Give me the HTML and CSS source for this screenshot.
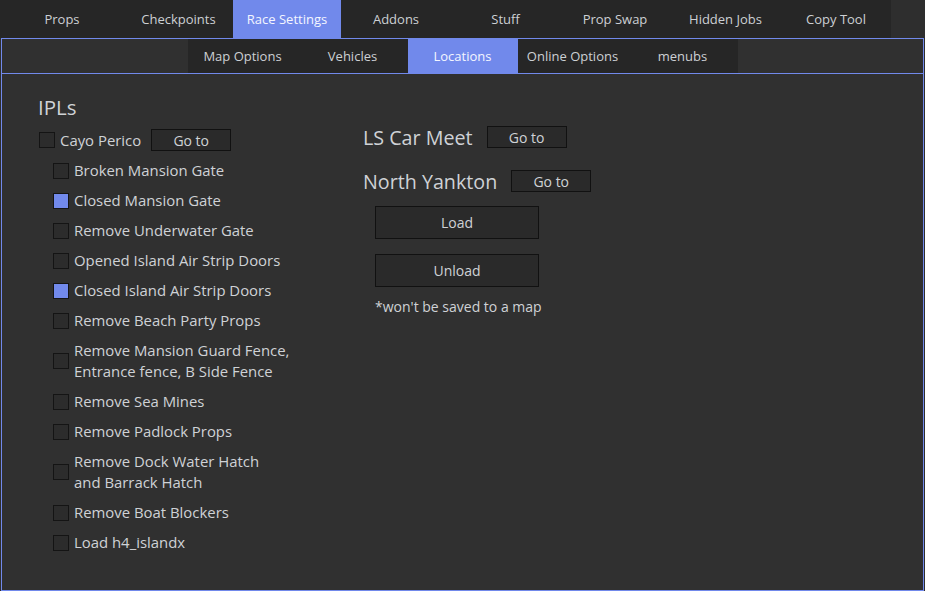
FILE: index.html
```html
<!DOCTYPE html>
<html>
<head>
<meta charset="utf-8">
<link rel="stylesheet" href="styles.css">
</head>
<body>
<nav class="tabs">
  <div class="tab w124">Props</div>
  <div class="tab w109">Checkpoints</div>
  <div class="tab w108 active">Race Settings</div>
  <div class="tab w110">Addons</div>
  <div class="tab w109">Stuff</div>
  <div class="tab w110">Prop Swap</div>
  <div class="tab w111">Hidden Jobs</div>
  <div class="tab w110">Copy Tool</div>
</nav>
<main class="panel">
  <div class="subbar">
    <div class="subtabs">
      <div class="subtab">Map Options</div>
      <div class="subtab">Vehicles</div>
      <div class="subtab active">Locations</div>
      <div class="subtab">Online Options</div>
      <div class="subtab">menubs</div>
    </div>
  </div>
  <div class="content">
    <section class="col-left">
      <h2 class="heading">IPLs</h2>
      <div class="row main-row">
        <span class="box"></span>
        <span class="label">Cayo Perico</span>
        <button class="btn goto">Go to</button>
      </div>
      <div class="row sub"><span class="box"></span><span class="label">Broken Mansion Gate</span></div>
      <div class="row sub"><span class="box checked"></span><span class="label">Closed Mansion Gate</span></div>
      <div class="row sub"><span class="box"></span><span class="label">Remove Underwater Gate</span></div>
      <div class="row sub"><span class="box"></span><span class="label">Opened Island Air Strip Doors</span></div>
      <div class="row sub"><span class="box checked"></span><span class="label">Closed Island Air Strip Doors</span></div>
      <div class="row sub"><span class="box"></span><span class="label">Remove Beach Party Props</span></div>
      <div class="row sub"><span class="box"></span><span class="label">Remove Mansion Guard Fence,<br>Entrance fence, B Side Fence</span></div>
      <div class="row sub"><span class="box"></span><span class="label">Remove Sea Mines</span></div>
      <div class="row sub"><span class="box"></span><span class="label">Remove Padlock Props</span></div>
      <div class="row sub"><span class="box"></span><span class="label">Remove Dock Water Hatch<br>and Barrack Hatch</span></div>
      <div class="row sub"><span class="box"></span><span class="label">Remove Boat Blockers</span></div>
      <div class="row sub"><span class="box"></span><span class="label">Load h4_islandx</span></div>
    </section>
    <section class="col-right">
      <div class="loc-row">
        <span class="loc-title">LS Car Meet</span>
        <button class="btn goto">Go to</button>
      </div>
      <div class="loc-row">
        <span class="loc-title">North Yankton</span>
        <button class="btn goto">Go to</button>
      </div>
      <div class="actions">
        <button class="btn wide">Load</button>
        <button class="btn wide">Unload</button>
        <p class="note">*won't be saved to a map</p>
      </div>
    </section>
  </div>
</main>
</body>
</html>
```

FILE: styles.css
```css
* { box-sizing: border-box; }
html, body {
  margin: 0;
  padding: 0;
  height: 591px;
  overflow: hidden;
}
body {
  background: #2e2e2e;
  font-family: "Open Sans", "Noto Sans", sans-serif;
  color: #cfd2d6;
  font-size: 14px;
}
.tabs {
  display: flex;
  width: 891px;
  height: 38px;
  background: #262626;
}
.tab {
  display: flex;
  align-items: center;
  justify-content: center;
  font-size: 13px;
  color: #cdd0d4;
  height: 38px;
}
.tab.active { background: #7189eb; color: #f4f6ff; }
.w124 { width: 124px; }
.w108 { width: 108px; }
.w109 { width: 109px; }
.w110 { width: 110px; }
.w111 { width: 111px; }

.panel {
  margin: 0 1px;
  height: 553px;
  border: 1px solid #7189eb;
  background: #303030;
}
.subbar {
  height: 35px;
  border-bottom: 1px solid #7189eb;
  display: flex;
  justify-content: center;
}
.subtabs {
  display: flex;
  background: #262626;
}
.subtab {
  width: 110px;
  height: 34px;
  display: flex;
  align-items: center;
  justify-content: center;
  font-size: 13px;
  color: #cdd0d4;
}
.subtab.active { background: #7189eb; color: #f4f6ff; }

.content {
  display: flex;
  padding: 20px 0 0 36px;
}
.col-left { width: 325px; }
.heading {
  margin: 0 0 8px 0;
  font-weight: normal;
  font-size: 20.5px;
  line-height: 27px;
  color: #cfd2d6;
}
.row {
  display: flex;
  align-items: center;
  line-height: 21px;
  margin-bottom: 9px;
}
.main-row { margin-bottom: 9px; padding-left: 1px; }
.row.sub { padding-left: 15px; }
.box {
  width: 16px;
  height: 16px;
  border: 1px solid #141414;
  background: #2c2c2c;
  margin-right: 5px;
  flex: none;
}
.box.checked { background: #7189eb; }
.label { font-size: 14.9px; }
.btn {
  font-family: inherit;
  font-size: 14px;
  color: #cfd2d6;
  background: #2a2a2a;
  border: 1px solid #111111;
  padding: 0;
  display: flex;
  align-items: center;
  justify-content: center;
}
.goto { width: 80px; height: 22px; margin-left: 10px; }
.col-right { padding-top: 32px; }
.loc-row {
  display: flex;
  align-items: center;
  height: 22px;
  margin-bottom: 22px;
}
.loc-title { font-size: 19.7px; }
.loc-row .goto { margin-left: 14px; }
.actions { padding-left: 12px; margin-top: -8px; }
.btn.wide { width: 164px; height: 33px; margin-bottom: 15px; }
.note { margin: -5px 0 0 0; font-size: 14px; line-height: 20px; }
```
